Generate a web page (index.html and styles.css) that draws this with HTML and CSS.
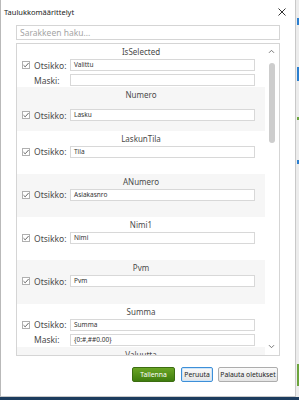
FILE: index.html
```html
<!DOCTYPE html>
<html lang="fi">
<head>
    <meta charset="UTF-8">
    <title>Taulukkomäärittelyt</title>
    <link rel="stylesheet" href="styles.css">
</head>
<body>
    <div class="screen">
        <div class="main">
            <div class="dialog">
                <div class="titlebar">
                    <span class="title">Taulukkomäärittelyt</span>
                    <svg class="close" width="8" height="8" viewBox="0 0 8 8">
                        <path d="M0.5 0.5 L7.5 7.5 M7.5 0.5 L0.5 7.5" stroke="#333" stroke-width="1" fill="none"/>
                    </svg>
                </div>

                <div class="content">
                    <div class="search">Sarakkeen haku...</div>

                    <div class="list">
                        <div class="items">
                            <div class="section">
                                <div class="section-name">IsSelected</div>
                                <div class="row">
                                    <span class="check"><svg width="8" height="8" viewBox="0 0 8 8"><path d="M1.5 4.2 L3.2 5.8 L6.6 2" stroke="#444" stroke-width="0.8" fill="none"/></svg></span>
                                    <span class="label">Otsikko:</span>
                                    <span class="field">Valittu</span>
                                </div>
                                <div class="row">
                                    <span class="check empty"></span>
                                    <span class="label">Maski:</span>
                                    <span class="field"></span>
                                </div>
                            </div>

                            <div class="section alt">
                                <div class="section-name">Numero</div>
                                <div class="row low">
                                    <span class="check"><svg width="8" height="8" viewBox="0 0 8 8"><path d="M1.5 4.2 L3.2 5.8 L6.6 2" stroke="#444" stroke-width="0.8" fill="none"/></svg></span>
                                    <span class="label">Otsikko:</span>
                                    <span class="field">Lasku</span>
                                </div>
                            </div>

                            <div class="section">
                                <div class="section-name">LaskunTila</div>
                                <div class="row">
                                    <span class="check"><svg width="8" height="8" viewBox="0 0 8 8"><path d="M1.5 4.2 L3.2 5.8 L6.6 2" stroke="#444" stroke-width="0.8" fill="none"/></svg></span>
                                    <span class="label">Otsikko:</span>
                                    <span class="field">Tila</span>
                                </div>
                            </div>

                            <div class="section alt">
                                <div class="section-name">ANumero</div>
                                <div class="row">
                                    <span class="check"><svg width="8" height="8" viewBox="0 0 8 8"><path d="M1.5 4.2 L3.2 5.8 L6.6 2" stroke="#444" stroke-width="0.8" fill="none"/></svg></span>
                                    <span class="label">Otsikko:</span>
                                    <span class="field">Asiakasnro</span>
                                </div>
                            </div>

                            <div class="section">
                                <div class="section-name">Nimi1</div>
                                <div class="row">
                                    <span class="check"><svg width="8" height="8" viewBox="0 0 8 8"><path d="M1.5 4.2 L3.2 5.8 L6.6 2" stroke="#444" stroke-width="0.8" fill="none"/></svg></span>
                                    <span class="label">Otsikko:</span>
                                    <span class="field">Nimi</span>
                                </div>
                            </div>

                            <div class="section alt">
                                <div class="section-name">Pvm</div>
                                <div class="row">
                                    <span class="check"><svg width="8" height="8" viewBox="0 0 8 8"><path d="M1.5 4.2 L3.2 5.8 L6.6 2" stroke="#444" stroke-width="0.8" fill="none"/></svg></span>
                                    <span class="label">Otsikko:</span>
                                    <span class="field">Pvm</span>
                                </div>
                            </div>

                            <div class="section">
                                <div class="section-name">Summa</div>
                                <div class="row">
                                    <span class="check"><svg width="8" height="8" viewBox="0 0 8 8"><path d="M1.5 4.2 L3.2 5.8 L6.6 2" stroke="#444" stroke-width="0.8" fill="none"/></svg></span>
                                    <span class="label">Otsikko:</span>
                                    <span class="field">Summa</span>
                                </div>
                                <div class="row">
                                    <span class="check empty"></span>
                                    <span class="label">Maski:</span>
                                    <span class="field">{0:#,##0.00}</span>
                                </div>
                            </div>

                            <div class="section alt">
                                <div class="section-name">Valuutta</div>
                            </div>
                        </div>

                        <div class="scrollbar">
                            <svg class="arrow" width="7" height="5" viewBox="0 0 7 5"><path d="M1 3.8 L3.5 1.3 L6 3.8" stroke="#666" stroke-width="0.9" fill="none"/></svg>
                            <div class="track"><div class="thumb"></div></div>
                            <svg class="arrow" width="7" height="5" viewBox="0 0 7 5"><path d="M1 1.2 L3.5 3.7 L6 1.2" stroke="#666" stroke-width="0.9" fill="none"/></svg>
                        </div>
                    </div>
                </div>

                <div class="footer">
                    <button class="btn save">Tallenna</button>
                    <button class="btn focused">Peruuta</button>
                    <button class="btn reset">Palauta oletukset</button>
                </div>
            </div>

            <div class="backdrop">
                <div class="mark blue m1"></div>
                <div class="mark blue m2"></div>
                <div class="mark green m3"></div>
                <div class="mark blue m4"></div>
                <div class="mark green m5"></div>
            </div>
        </div>
        <div class="taskbar"></div>
    </div>
</body>
</html>
```

FILE: styles.css
```css
/* Pohja */
body {
    margin: 0;
    font-family: "Noto Sans", "Open Sans", sans-serif;
    color: #444444;
    background-color: #ffffff;
}

.screen {
    width: 299px;
    height: 400px;
    display: flex;
    flex-direction: column;
    overflow: hidden;
}

.main {
    flex: 1;
    display: flex;
}

/* Dialogi */
.dialog {
    width: 294px;
    border-left: 1px solid #b9b9b9;
    border-right: 1px solid #c9c9c9;
    border-bottom: 1px solid #c9c9c9;
    background-color: #ffffff;
    display: flex;
    flex-direction: column;
}

.titlebar {
    height: 25px;
    display: flex;
    align-items: center;
    justify-content: space-between;
    padding: 0 9px 0 3px;
}

.title {
    font-size: 7.5px;
    color: #222222;
    margin-top: -1px;
}

.close {
    margin-top: -1px;
}

.content {
    padding: 0 15px 0 15px;
}

.search {
    height: 13px;
    border: 1px solid #d5d5d5;
    font-size: 8.5px;
    line-height: 13px;
    color: #a5a5a5;
    padding-left: 3px;
    margin-bottom: 3px;
}

/* Sarakelista */
.list {
    height: 311px;
    border: 1px solid #d5d5d5;
    display: flex;
    overflow: hidden;
}

.items {
    width: 248px;
}

.section {
    padding-bottom: 1.3px;
    height: 42px;
}

.section.alt {
    background-color: #f6f6f6;
}

.section-name {
    height: 15px;
    line-height: 15px;
    text-align: center;
    font-size: 8px;
    color: #4a4a4a;
}

.row {
    height: 12px;
    display: flex;
    align-items: center;
    margin-bottom: 3px;
    padding-left: 5px;
}

.row.low {
    margin-top: 7px;
}

.check {
    width: 8px;
    height: 8px;
    border: 1px solid #b0b0b0;
    background-color: #ffffff;
    box-sizing: border-box;
    display: flex;
    align-items: center;
    justify-content: center;
    margin-right: 4px;
}

.check svg {
    flex: none;
}

.check.empty {
    visibility: hidden;
}

.label {
    width: 36px;
    font-size: 8.5px;
    color: #4a4a4a;
}

.field {
    width: 185px;
    height: 12px;
    border: 1px solid #d8d8d8;
    box-sizing: border-box;
    background-color: #ffffff;
    font-size: 6.5px;
    line-height: 10px;
    padding-left: 3px;
    color: #333333;
}

/* Vierityspalkki */
.scrollbar {
    width: 13px;
    display: flex;
    flex-direction: column;
    align-items: center;
    padding-top: 5px;
}

.track {
    flex: 1;
    width: 6px;
    padding-top: 3px;
}

.thumb {
    width: 6px;
    height: 80px;
    border-radius: 3px;
    background-color: #cdcdcd;
}

.arrow {
    flex: none;
    margin-bottom: 6px;
}

/* Painikkeet */
.footer {
    display: flex;
    justify-content: flex-end;
    gap: 5px;
    padding: 11px 17px 0 0;
}

.btn {
    height: 15px;
    padding: 0;
    font-family: "Noto Sans", "Open Sans", sans-serif;
    font-size: 6.8px;
    color: #222222;
    border: 1px solid #adadad;
    border-radius: 2px;
    background: linear-gradient(#fafafa, #e4e4e4);
}

.btn.save {
    width: 43px;
    margin-right: 1px;
    color: #ffffff;
    border-color: #3c6d11;
    background: linear-gradient(#6aa525, #3f7d0e);
}

.btn.focused {
    width: 32px;
    border-color: #3d8fd8;
    box-shadow: inset 0 0 0 1px #cfe5f8;
}

.btn.reset {
    width: 60px;
}

/* Tausta */
.backdrop {
    flex: 1;
    background-color: #ececec;
    display: flex;
    flex-direction: column;
    align-items: flex-end;
}

.mark {
    width: 2px;
}

.blue {
    background-color: #2b7fd0;
}

.green {
    background-color: #6da53d;
}

.m1 { height: 7px; margin-top: 18px; }
.m2 { height: 14px; margin-top: 42px; }
.m3 { height: 3px; margin-top: 36px; }
.m4 { height: 4px; margin-top: 40px; }
.m5 { height: 22px; margin-top: 200px; }

.taskbar {
    height: 3px;
    background-color: #1d3c5e;
}
```
